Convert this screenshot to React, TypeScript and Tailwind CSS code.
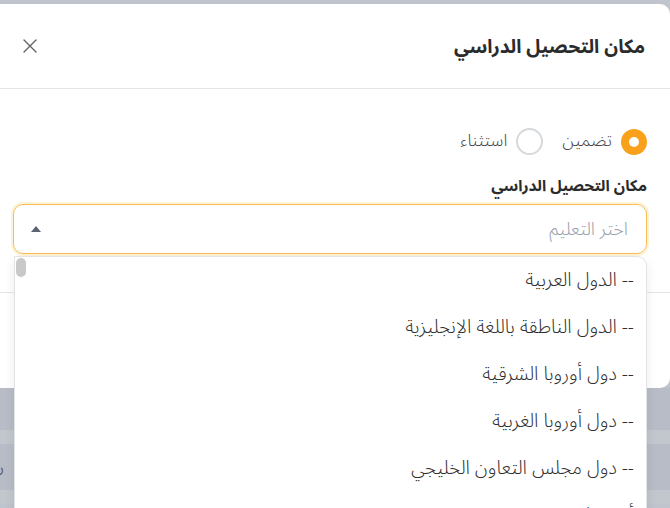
import React from 'react';

const options = [
	'-- الدول العربية',
	'-- الدول الناطقة باللغة الإنجليزية',
	'-- دول أوروبا الشرقية',
	'-- دول أوروبا الغربية',
	'-- دول مجلس التعاون الخليجي',
	'أذربيجان',
];

const font = { fontFamily: '"Noto Sans Arabic", "Noto Sans", "DejaVu Sans", sans-serif' };

const CloseIcon = () => (
	<svg width="16" height="16" viewBox="0 0 16 16" fill="none" stroke="#5f6368" strokeWidth="1.4" strokeLinecap="round">
		<path d="M2 2 L14 14 M14 2 L2 14" />
	</svg>
);

const App = () => {
	return (
		<div className="relative h-[508px] w-[670px] overflow-hidden bg-[#c0c4cc]" style={font}>
			{/* modal */}
			<div dir="rtl" className="relative z-10 ml-[-10px] mt-[4px] w-[680px] rounded-r-[10px] bg-white">
				{/* header */}
				<div className="flex h-[85px] items-center justify-between border-b border-[#e3e5e8] pl-[30px] pr-[25px]">
					<h2 className="pt-[2px] text-[19px] font-bold text-[#2b2b2b]">مكان التحصيل الدراسي</h2>
					<button className="flex h-[20px] w-[20px] items-center justify-center">
						<CloseIcon />
					</button>
				</div>

				{/* body */}
				<div className="px-[23px] pb-[38px] pt-[39px]">
					<div className="flex items-center gap-[19px]">
						<label className="flex items-center gap-[9px]">
							<span className="flex h-[26px] w-[26px] items-center justify-center rounded-full bg-[#f9a11b]">
								<span className="h-[10px] w-[10px] rounded-full bg-white" />
							</span>
							<span className="text-[17px] font-light text-[#454545]">تضمين</span>
						</label>
						<label className="flex items-center gap-[9px]">
							<span className="h-[27px] w-[27px] rounded-full border-2 border-[#d5d8dc] bg-white" />
							<span className="text-[17px] font-light text-[#454545]">استثناء</span>
						</label>
					</div>

					<div className="mt-[20px] text-[15.5px] font-bold leading-[22px] text-[#2b2b2b]">مكان التحصيل الدراسي</div>

					<div className="relative mt-[7px]">
						<div className="flex h-[50px] items-center justify-between rounded-[10px] border-[1.5px] border-[#f8bd55] pl-[17px] pr-[18px] shadow-[0_0_0_2px_rgba(251,191,36,0.18)]">
							<span className="text-[18px] font-light text-[#97a0ac]">اختر التعليم</span>
							<span className="h-0 w-0 border-x-[5px] border-b-[6px] border-x-transparent border-b-[#5b6475]" />
						</div>

						{/* dropdown menu */}
						<div className="absolute left-[1px] right-0 top-[52px] z-20 h-[270px] overflow-hidden rounded-tr-[10px] border border-[#e2e4e8] bg-white shadow-[0_4px_12px_rgba(0,0,0,0.08)]">
							<div className="absolute left-[1px] top-[1px] h-[19px] w-[10px] rounded-[5px] bg-[#c9c9c9]" />
							{options.map((o) => (
								<div key={o} className="flex h-[47px] items-center pr-[12px] text-[19px] font-light text-[#2f2f2f]">
									{o}
								</div>
							))}
						</div>
					</div>
				</div>

				{/* footer */}
				<div className="h-[96px] border-t border-[#e3e5e8]" />
			</div>

			{/* page behind overlay */}
			<div className="text-[#555b6a]">
				<div className="flex h-[42px] items-center bg-[#b8bcc6] text-[14px]">
					<span className="-ml-[6px]">ة</span>
				</div>
				<div className="h-[14px] bg-[#c2c6cd]" />
				<div className="flex h-[46px] items-center bg-[#b8bcc6] text-[14px]">
					<span className="-ml-[6px]">ن</span>
				</div>
				<div className="h-[14px] bg-[#c2c6cd]" />
			</div>
		</div>
	);
};

export default App;
